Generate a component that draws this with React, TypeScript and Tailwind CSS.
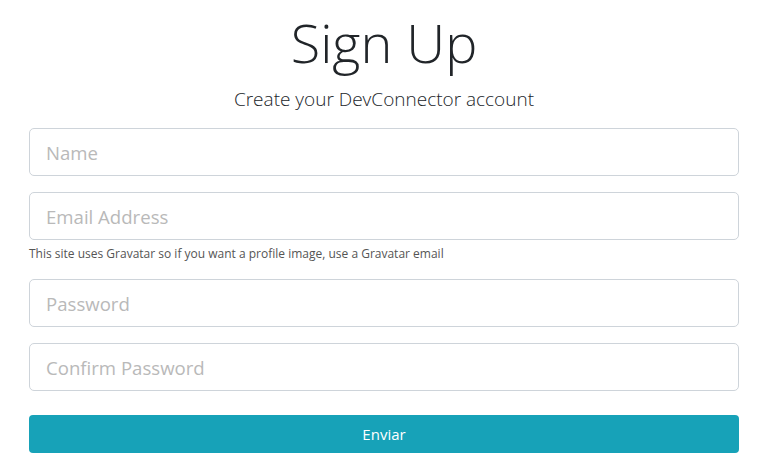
import React from 'react';

const inputCls =
  'block w-full h-12 px-4 text-[18.6px] text-[#495057] bg-white border border-[#ced4da] rounded-[5px] placeholder:text-[#b9b9b9] outline-none';

export default function App() {
  return (
    <div className="min-h-screen bg-white font-['Open_Sans',sans-serif] text-[#212529]">
      <div className="w-[710px] ml-[29px]">
        <h1 className="pt-[10px] text-center text-[54px] font-light leading-[1.2] mb-[10px]">Sign Up</h1>
        <p className="text-center text-[19px] font-light leading-[1.5] mb-[15px]">
          Create your DevConnector account
        </p>
        <form onSubmit={(e) => e.preventDefault()}>
          <div className="mb-4">
            <input type="text" placeholder="Name" className={inputCls} />
          </div>
          <div className="mb-4">
            <input type="email" placeholder="Email Address" className={inputCls} />
            <small className="block mt-1 text-[12px] leading-[19px] text-[#555]">
              This site uses Gravatar so if you want a profile image, use a Gravatar email
            </small>
          </div>
          <div className="mb-4">
            <input type="password" placeholder="Password" className={inputCls} />
          </div>
          <div>
            <input type="password" placeholder="Confirm Password" className={inputCls} />
          </div>
          <button
            type="submit"
            className="mt-6 block w-full h-[38px] rounded-[4px] bg-[#17a2b8] text-white text-[15px]"
          >
            Enviar
          </button>
        </form>
      </div>
    </div>
  );
}
